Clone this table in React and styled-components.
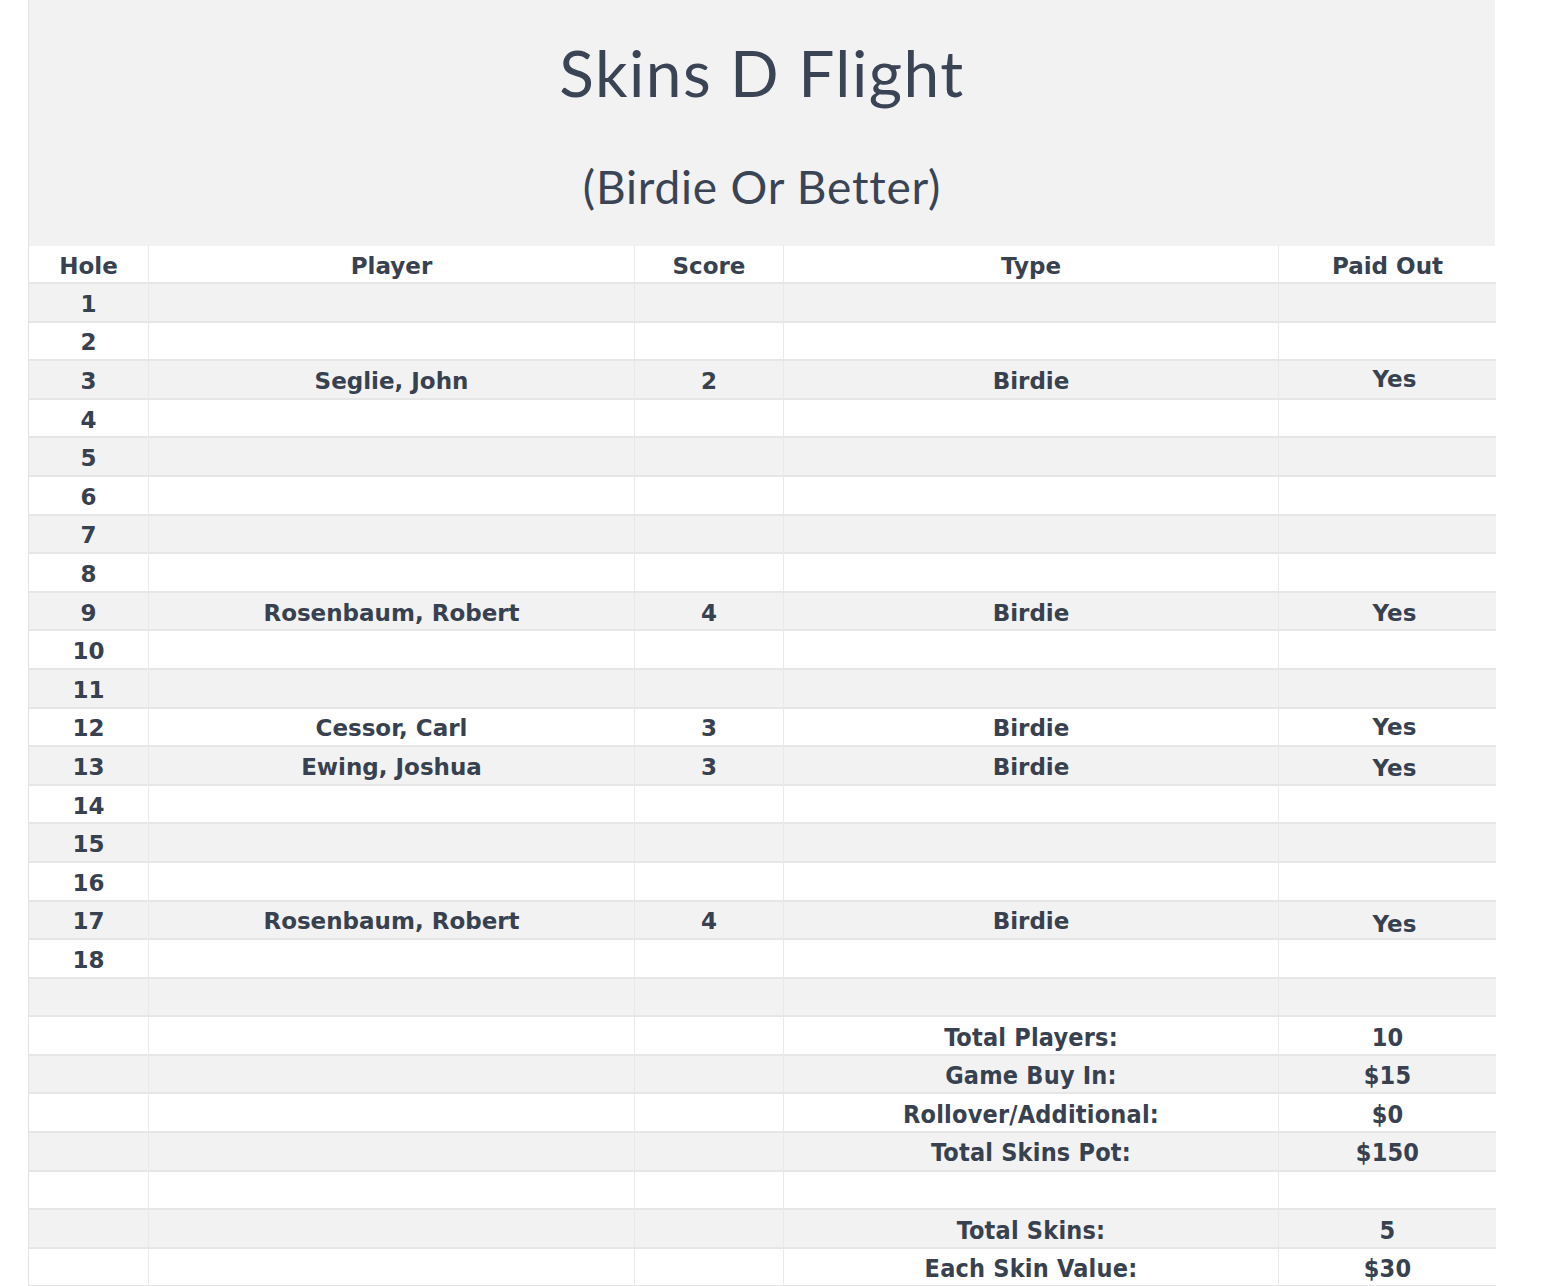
import React from 'react';
import styled, { createGlobalStyle } from 'styled-components';

const holes = [
  { hole: 1 },
  { hole: 2 },
  { hole: 3, player: 'Seglie, John', score: 2, type: 'Birdie', paid: 'Yes', offset: -2 },
  { hole: 4 },
  { hole: 5 },
  { hole: 6 },
  { hole: 7 },
  { hole: 8 },
  { hole: 9, player: 'Rosenbaum, Robert', score: 4, type: 'Birdie', paid: 'Yes' },
  { hole: 10 },
  { hole: 11 },
  { hole: 12, player: 'Cessor, Carl', score: 3, type: 'Birdie', paid: 'Yes', offset: -1 },
  { hole: 13, player: 'Ewing, Joshua', score: 3, type: 'Birdie', paid: 'Yes', offset: 1 },
  { hole: 14 },
  { hole: 15 },
  { hole: 16 },
  { hole: 17, player: 'Rosenbaum, Robert', score: 4, type: 'Birdie', paid: 'Yes', offset: 3 },
  { hole: 18 },
];

const summary = [
  null,
  { label: 'Total Players:', value: '10' },
  { label: 'Game Buy In:', value: '$15' },
  { label: 'Rollover/Additional:', value: '$0' },
  { label: 'Total Skins Pot:', value: '$150' },
  null,
  { label: 'Total Skins:', value: '5' },
  { label: 'Each Skin Value:', value: '$30' },
];

const GlobalStyle = createGlobalStyle`
  body {
    margin: 0;
    background: #ffffff;
    color: #37414f;
  }
`;

const Page = styled.div`
  padding-left: 28px;
  width: 1467px;
`;

const Sheet = styled.div`
  background: #f2f2f2;
  border-left: 1px solid #e2e2e2;
`;

const Header = styled.div`
  height: 246px;
  display: flex;
  flex-direction: column;
  align-items: center;
  font-family: Lato, 'Open Sans', sans-serif;
  color: #3a4455;
`;

const Title = styled.h1`
  margin: 34px 0 0;
  font-size: 64px;
  font-weight: 400;
  letter-spacing: 1.5px;
  line-height: 78px;
`;

const Subtitle = styled.h2`
  margin: 47px 0 0;
  font-size: 46px;
  font-weight: 400;
  letter-spacing: 0.8px;
  line-height: 56px;
`;

const Table = styled.div`
  display: grid;
  grid-template-columns: 120px 486px 149px 495px 217px;
`;

const Row = styled.div`
  display: contents;
`;

const Cell = styled.div`
  height: ${(p) => (p.$head ? '38px' : '38.6px')};
  box-sizing: border-box;
  padding-top: 3px;
  display: flex;
  align-items: center;
  justify-content: center;
  background: ${(p) => (p.$shade ? '#f2f2f2' : '#ffffff')};
  border-bottom: 2px solid #e6e6e6;
  border-right: 1px solid #e9e9e9;
  font-family: 'DejaVu Sans', Verdana, sans-serif;
  font-weight: 700;
  font-size: 23px;
  color: #37414f;
  white-space: nowrap;

  &:last-child {
    border-right: none;
  }
`;

const Shifted = styled.span`
  position: relative;
  left: 7px;
  top: ${(p) => p.$offset || 0}px;
`;

const Narrow = styled.span`
  font-family: 'Liberation Sans Narrow', 'DejaVu Sans Condensed', sans-serif;
  font-size: 25px;
  font-weight: 700;
  letter-spacing: 0.2px;
`;

const App = () => {
  return (
    <Page>
      <GlobalStyle />
      <Sheet>
        <Header>
          <Title>Skins D Flight</Title>
          <Subtitle>(Birdie Or Better)</Subtitle>
        </Header>
        <Table>
          <Row>
            <Cell $head>Hole</Cell>
            <Cell $head>Player</Cell>
            <Cell $head>Score</Cell>
            <Cell $head>Type</Cell>
            <Cell $head>Paid Out</Cell>
          </Row>
          {holes.map((h, i) => {
            const shade = i % 2 === 0;
            return (
              <Row key={h.hole}>
                <Cell $shade={shade}>{h.hole}</Cell>
                <Cell $shade={shade}>{h.player}</Cell>
                <Cell $shade={shade}>{h.score}</Cell>
                <Cell $shade={shade}>{h.type}</Cell>
                <Cell $shade={shade}>
                  {h.paid && <Shifted $offset={h.offset}>{h.paid}</Shifted>}
                </Cell>
              </Row>
            );
          })}
          {summary.map((s, i) => {
            const shade = i % 2 === 0;
            return (
              <Row key={'s' + i}>
                <Cell $shade={shade} />
                <Cell $shade={shade} />
                <Cell $shade={shade} />
                <Cell $shade={shade}>{s && <Narrow>{s.label}</Narrow>}</Cell>
                <Cell $shade={shade}>{s && <Narrow>{s.value}</Narrow>}</Cell>
              </Row>
            );
          })}
        </Table>
      </Sheet>
    </Page>
  );
};

export default App;
